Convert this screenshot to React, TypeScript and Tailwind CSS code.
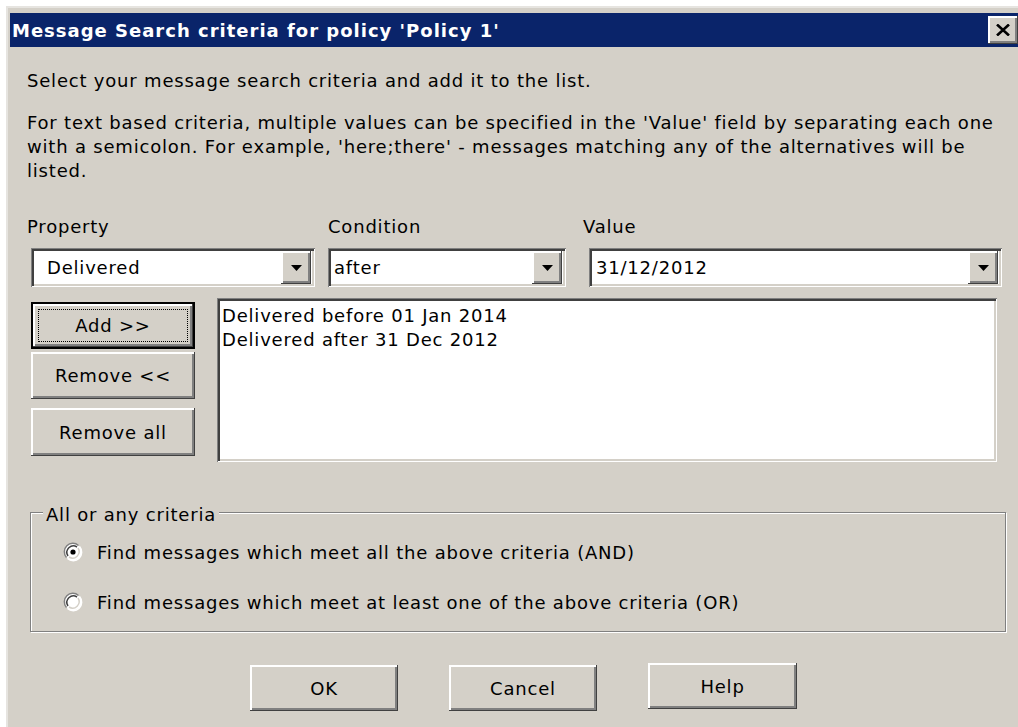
import React from "react";

const raised =
  "shadow-[inset_-1px_-1px_0_#404040,inset_2px_2px_0_#ffffff,inset_-3px_-3px_0_#808080]";
const sunken =
  "shadow-[inset_1px_1px_0_#808080,inset_-1px_-1px_0_#ffffff,inset_3px_3px_0_#404040,inset_-3px_-3px_0_#d4d0c8]";

function DropArrow() {
  return (
    <div
      className={`flex items-center justify-center w-[30px] h-[33px] bg-[#d4d0c8] ${raised}`}
    >
      <svg width="11" height="6" viewBox="0 0 11 6">
        <path d="M0 0H11L5.5 6Z" fill="#000" />
      </svg>
    </div>
  );
}

function Combo({ value, width, textPad }: { value: string; width: string; textPad: string }) {
  return (
    <div className={`${width} h-[39px] bg-white flex items-center ${sunken} pr-[4px]`}>
      <span className={`flex-1 ${textPad} leading-[24px] truncate`}>{value}</span>
      <DropArrow />
    </div>
  );
}

function Button({ label, className = "" }: { label: string; className?: string }) {
  return (
    <div
      className={`flex items-center justify-center bg-[#d4d0c8] ${raised} ${className}`}
    >
      {label}
    </div>
  );
}

function Radio({ checked, label }: { checked: boolean; label: string }) {
  return (
    <div className="flex items-center h-[24px]">
      <svg width="20" height="20" viewBox="0 0 20 20" className="ml-[32px]">
        <circle cx="10" cy="10" r="8.5" fill="#fff" />
        <path d="M3.5 15.5A8.5 8.5 0 0 1 15.5 3.5" stroke="#808080" strokeWidth="1.5" fill="none" />
        <path d="M5 14A6.5 6.5 0 0 1 14 5" stroke="#404040" strokeWidth="1.5" fill="none" />
        <path d="M16.5 4.5A8.5 8.5 0 0 1 4.5 16.5" stroke="#ffffff" strokeWidth="1.5" fill="none" />
        <path d="M15 6A6.5 6.5 0 0 1 6 15" stroke="#d4d0c8" strokeWidth="1.5" fill="none" />
        {checked && <circle cx="10" cy="10" r="2.6" fill="#000" />}
      </svg>
      <span className="ml-[14px]">{label}</span>
    </div>
  );
}

export default function App() {
  return (
    <div
      className="w-[1018px] h-[727px] bg-white pt-[6px] pl-[6px] overflow-hidden text-black text-[18px] tracking-[0.8px]"
      style={{ fontFamily: "'DejaVu Sans', sans-serif" }}
    >
      <div className="h-[721px] bg-[#d4d0c8] pt-[7px] pl-[4px] shadow-[inset_2px_2px_0_#e6e4e0]">
        {/* title bar */}
        <div className="h-[34px] bg-[#0a246a] flex items-center justify-between">
          <span className="ml-[2px] text-white font-bold text-[18px] tracking-[1px] whitespace-nowrap">
            Message Search criteria for policy 'Policy 1'
          </span>
          <div
            className={`w-[30px] h-[28px] bg-[#d4d0c8] flex items-center justify-center ${raised}`}
          >
            <svg width="14" height="12" viewBox="0 0 14 12">
              <path d="M1 0.5L13 11.5M13 0.5L1 11.5" stroke="#000" strokeWidth="2.6" />
            </svg>
          </div>
        </div>

        {/* body */}
        <div className="pl-[17px] pt-[22px]">
          <p className="leading-[24px] whitespace-nowrap">
            Select your message search criteria and add it to the list.
          </p>
          <p className="leading-[24px] mt-[18px] whitespace-nowrap">
            <span className="block">
              For text based criteria, multiple values can be specified in the 'Value' field by
              separating each one
            </span>
            <span className="block">
              with a semicolon. For example, 'here;there' - messages matching any of the
              alternatives will be
            </span>
            <span className="block">listed.</span>
          </p>

          {/* property / condition / value */}
          <div className="flex mt-[32px] leading-[24px]">
            <div className="w-[301px]">
              <div>Property</div>
              <div className="mt-[9px] ml-[4px]">
                <Combo value="Delivered" width="w-[284px]" textPad="pl-[16px]" />
              </div>
            </div>
            <div className="w-[255px]">
              <div>Condition</div>
              <div className="mt-[9px]">
                <Combo value="after" width="w-[238px]" textPad="pl-[6px]" />
              </div>
            </div>
            <div>
              <div>Value</div>
              <div className="mt-[9px] ml-[6px]">
                <Combo value="31/12/2012" width="w-[413px]" textPad="pl-[7px]" />
              </div>
            </div>
          </div>

          {/* buttons + criteria list */}
          <div className="flex mt-[11px]">
            <div className="ml-[4px] mt-[4px] w-[164px] flex flex-col">
              <div className="h-[47px] border-2 border-black">
                <div
                  className={`h-full flex items-center justify-center bg-[#d4d0c8] ${raised} p-[5px]`}
                >
                  <div className="w-full h-full border border-dotted border-black flex items-center justify-center">
                    Add &gt;&gt;
                  </div>
                </div>
              </div>
              <Button label="Remove <<" className="h-[47px] mt-[3px]" />
              <Button label="Remove all" className="h-[48px] mt-[9px]" />
            </div>
            <div
              className={`ml-[22px] w-[780px] h-[164px] bg-white ${sunken} pl-[5px] pt-[6px] leading-[24px]`}
            >
              <div>Delivered before 01 Jan 2014</div>
              <div>Delivered after 31 Dec 2012</div>
            </div>
          </div>

          {/* all / any */}
          <div className="relative mt-[50px] ml-[3px] w-[976px] h-[120px] border border-[#808080] shadow-[1px_1px_0_#ffffff,inset_1px_1px_0_#ffffff]">
            <span className="absolute -top-[10px] left-[12px] px-[3px] bg-[#d4d0c8] leading-[24px]">
              All or any criteria
            </span>
            <div className="pt-[27px] flex flex-col gap-[26px]">
              <Radio checked label="Find messages which meet all the above criteria (AND)" />
              <Radio checked={false} label="Find messages which meet at least one of the above criteria (OR)" />
            </div>
          </div>

          {/* dialog buttons */}
          <div className="flex items-start mt-[33px] ml-[223px] gap-[51px]">
            <Button label="OK" className="w-[148px] h-[46px]" />
            <Button label="Cancel" className="w-[148px] h-[46px]" />
            <Button label="Help" className="w-[149px] h-[46px] -mt-[2px]" />
          </div>
        </div>
      </div>
    </div>
  );
}
